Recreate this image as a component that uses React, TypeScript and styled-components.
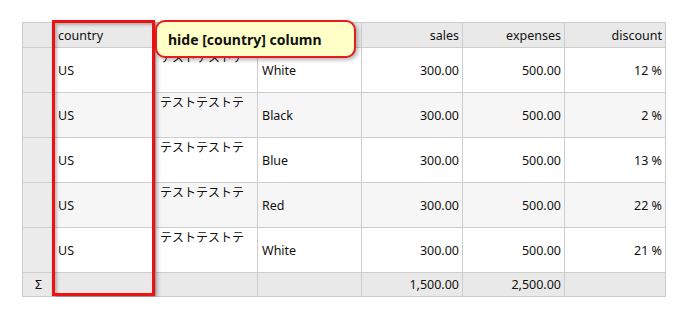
import React from 'react'
import styled, { createGlobalStyle } from 'styled-components'

const GlobalStyle = createGlobalStyle`
  html, body {
    margin: 0;
    padding: 0;
    background: #ffffff;
  }
  body {
    font-family: 'Noto Sans', 'Noto Sans CJK JP', sans-serif;
    color: #111;
  }
`

const Page = styled.div`
  padding: 22px 0 0 22px;
`

const Frame = styled.div`
  position: relative;
  width: 644px;
`

const Grid = styled.table`
  border-collapse: collapse;
  table-layout: fixed;
  width: 643px;
  font-size: 12.5px;
  border: 1px solid #c4c4c4;
`

const HeadCell = styled.th<{ $align?: 'left' | 'right' }>`
  height: 24px;
  padding: 0 3px 0 4px;
  background: #e9e9e9;
  border: 1px solid #cdcdcd;
  font-weight: 400;
  text-align: ${({ $align }) => $align ?? 'right'};
  vertical-align: middle;
  white-space: nowrap;
`

const Row = styled.tr<{ $shade: boolean }>`
  background: ${({ $shade }) => ($shade ? '#f6f6f6' : '#ffffff')};
`

const Cell = styled.td<{ $align?: 'left' | 'right'; $top?: boolean }>`
  height: ${({ $top }) => ($top ? '42px' : '44px')};
  padding: ${({ $top }) => ($top ? '2px 3px 0 4px' : '0 3px 0 4px')};
  border: 1px solid #cdcdcd;
  text-align: ${({ $align }) => $align ?? 'left'};
  vertical-align: ${({ $top }) => ($top ? 'top' : 'middle')};
  font-size: ${({ $top }) => ($top ? '12px' : 'inherit')};
  line-height: ${({ $top }) => ($top ? '16px' : 'normal')};
  white-space: nowrap;
  overflow: hidden;
`

const RowHead = styled.td`
  background: #ececec;
  border: 1px solid #cdcdcd;
  text-align: center;
`

const FootCell = styled.td<{ $align?: 'left' | 'right' }>`
  height: 23px;
  padding: 0 3px 0 4px;
  background: #e9e9e9;
  border: 1px solid #cdcdcd;
  text-align: ${({ $align }) => $align ?? 'right'};
  vertical-align: middle;
`

const Highlight = styled.div`
  position: absolute;
  left: 30px;
  top: -2px;
  width: 97px;
  height: 270px;
  border: 3px solid #ee1111;
  box-shadow: 2px 2px 4px rgba(0, 0, 0, 0.35), inset 2px 2px 3px rgba(0, 0, 0, 0.25);
  pointer-events: none;
`

const Callout = styled.div`
  position: absolute;
  left: 133px;
  top: -2px;
  width: 201px;
  height: 38px;
  box-sizing: border-box;
  padding-left: 11px;
  display: flex;
  align-items: center;
  background: #ffffc8;
  border: 2px solid #e81c1c;
  border-radius: 10px;
  box-shadow: 2px 2px 4px rgba(0, 0, 0, 0.3);
  font-size: 14px;
  font-weight: 700;
  color: #111;
`

const rows = [
  { color: 'White', discount: 12 },
  { color: 'Black', discount: 2 },
  { color: 'Blue', discount: 13 },
  { color: 'Red', discount: 22 },
  { color: 'White', discount: 21 },
]

export default function App() {
  return (
    <Page>
      <GlobalStyle />
      <Frame>
        <Grid>
          <colgroup>
            <col style={{ width: 31 }} />
            <col style={{ width: 102 }} />
            <col style={{ width: 102 }} />
            <col style={{ width: 104 }} />
            <col style={{ width: 101 }} />
            <col style={{ width: 102 }} />
            <col style={{ width: 101 }} />
          </colgroup>
          <thead>
            <tr>
              <HeadCell />
              <HeadCell $align="left">country</HeadCell>
              <HeadCell />
              <HeadCell />
              <HeadCell>sales</HeadCell>
              <HeadCell>expenses</HeadCell>
              <HeadCell>discount</HeadCell>
            </tr>
          </thead>
          <tbody>
            {rows.map((r, i) => (
              <Row key={i} $shade={i % 2 === 1}>
                <RowHead />
                <Cell>US</Cell>
                <Cell $top>テストテストテ</Cell>
                <Cell>{r.color}</Cell>
                <Cell $align="right">300.00</Cell>
                <Cell $align="right">500.00</Cell>
                <Cell $align="right">{r.discount} %</Cell>
              </Row>
            ))}
            <tr>
              <FootCell style={{ textAlign: 'center' }}>Σ</FootCell>
              <FootCell />
              <FootCell />
              <FootCell />
              <FootCell>1,500.00</FootCell>
              <FootCell>2,500.00</FootCell>
              <FootCell />
            </tr>
          </tbody>
        </Grid>
        <Highlight />
        <Callout>hide [country] column</Callout>
      </Frame>
    </Page>
  )
}
